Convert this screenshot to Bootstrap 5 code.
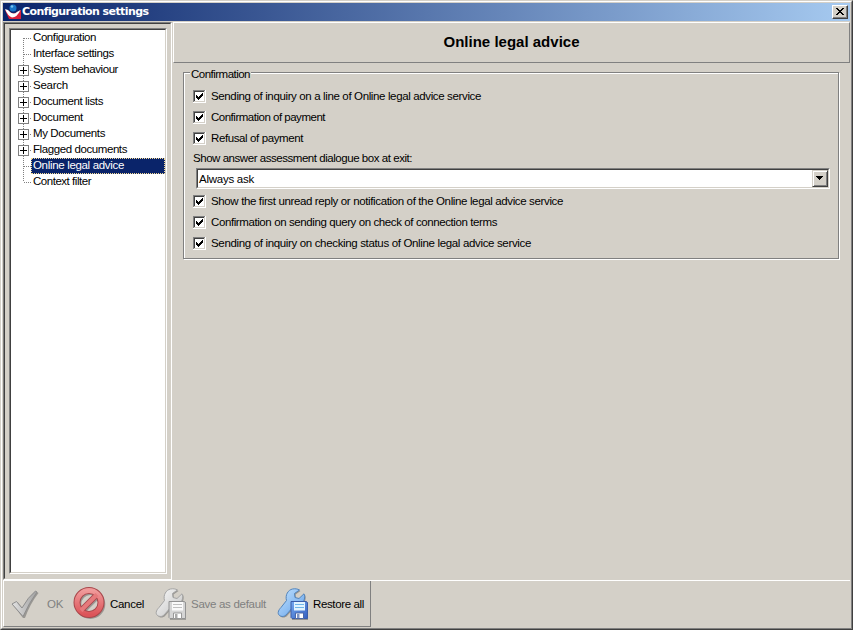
<!DOCTYPE html>
<html lang="en">
<head>
<meta charset="utf-8">
<title>Configuration settings</title>
<link href="https://cdn.jsdelivr.net/npm/bootstrap@5.3.0/dist/css/bootstrap.min.css" rel="stylesheet">
<style>
:root{--face:#d4d0c8;--mid:#808080;--dark:#404040}
body{margin:0;background:var(--face);font:11.5px/16px "Liberation Sans",Arial,sans-serif;color:#000;overflow:hidden}
svg{display:block;flex:none}
.win{width:853px;height:630px;background:var(--face);border:1px solid;border-color:var(--face) var(--dark) var(--dark) var(--face)}
.win-in{height:628px;border:1px solid;border-color:#fff var(--mid) var(--mid) #fff;padding:1px}
.caption{height:18px;background:linear-gradient(90deg,#0a246a,#a6caf0);color:#fff;margin-bottom:1px;padding:0 2px 0 2px}
.caption-text{font:bold 11px/18px "DejaVu Sans","Noto Sans",sans-serif;margin-left:1px}
.btn-close-win{width:16px;height:14px;border:1px solid;border-color:#fff var(--dark) var(--dark) #fff;box-shadow:inset -1px -1px var(--mid);background:var(--face);border-radius:0;padding:0}
.upper{height:558px}
.side{width:169px;border:1px solid;border-color:var(--mid) #fff #fff var(--mid);height:558px}
.side-in{border:1px solid;border-color:var(--dark) var(--face) var(--face) var(--dark);padding:4px;height:556px}
.sunk{border:1px solid;border-color:var(--mid) #fff #fff var(--mid)}
.sunk-in{border:1px solid;border-color:var(--dark) var(--face) var(--face) var(--dark);background:#fff}
.tree{width:158px;height:546px}
.tree .sunk-in{height:544px}
.tree-row{height:16px}
.tree-row svg{margin-left:4px}
.tree-label{height:16px;line-height:12px;flex:1;padding-left:1px;border:1px solid transparent}
.tree-row.sel .tree-label{background:#0a246a;color:#fff;border:1px dotted #f5db95}
.fit{display:inline-block;white-space:pre;line-height:inherit}
.main{width:678px}
.head{height:41px;border:1px solid;border-color:#fff var(--mid) var(--mid) #fff;width:677px;margin-left:1px;padding-bottom:2px;font-weight:bold;font-size:15px}
.group{margin:9px 10px 0 11px;width:656px;height:187px;border:1px solid var(--mid);box-shadow:1px 1px #fff,inset 1px 1px #fff;padding:0 9px 0 9px}
.legend-text{background:var(--face);height:14px;line-height:14px;margin:-6px 0 0 -3px;padding:0 1px;width:61px;position:relative}
.check-row{height:21px}
.check-row .fit{line-height:16px;padding-bottom:2px}
.box{width:13px;height:13px;margin-right:5px}
.checks-a{padding-top:5px}
.checks-b{padding-top:2px}
.ask-line{height:19px;padding-top:1px}
.combo{width:634px;height:21px;margin-left:3px}
.combo .sunk-in{height:19px;padding-left:1px}
.combo .fit{line-height:18px}
.combo-btn{width:16px;height:17px;border:1px solid;border-color:var(--face) var(--dark) var(--dark) var(--face);box-shadow:inset 1px 1px #fff,inset -1px -1px var(--mid);background:var(--face)}
.lower{border-top:1px solid #fff;height:48px;width:847px}
.tools{width:368px;height:46px;border:1px solid;border-color:transparent var(--mid) var(--mid) #fff;border-top:0}
.off{color:var(--mid)}
</style>
</head>
<body>
<svg width="0" height="0" class="position-absolute">
<defs>
<linearGradient id="gw" x1="0" y1="0" x2="1" y2="1"><stop offset="0" stop-color="#fafafa"/><stop offset="1" stop-color="#c2c2c2"/></linearGradient>
<linearGradient id="gc" x1="0" y1="0" x2="1" y2="0"><stop offset="0" stop-color="#e2e2e2"/><stop offset=".45" stop-color="#c4c4c4"/><stop offset="1" stop-color="#a2a2a2"/></linearGradient>
<linearGradient id="bw" x1="0" y1="0" x2="1" y2="1"><stop offset="0" stop-color="#c5e4ff"/><stop offset="1" stop-color="#5f9ee8"/></linearGradient>
<linearGradient id="bd" x1="0" y1="0" x2="1" y2="1"><stop offset="0" stop-color="#76aaf0"/><stop offset="1" stop-color="#345fc0"/></linearGradient>
<linearGradient id="rd" x1="0" y1="0" x2="0" y2="1"><stop offset="0" stop-color="#f09a9a"/><stop offset="1" stop-color="#dc5459"/></linearGradient>
<path id="wrench" d="M9.500 12.500C8 7 11 2 15.500 1C18 .5 20.500 .8 22.500 2L17.500 5.500L18 9.500L22 10.500L27 5.800C28.500 9 27.500 14 23.500 16L17 18L9 27C6 30 .8 28 1.200 24.500C1.300 22.500 3 20.500 4 19.500Z"/>
</defs>
</svg>
<div class="win"><div class="win-in">
  <div class="caption d-flex align-items-center">
    <svg width="16" height="16" viewBox="0 0 16 16"><path d="M0 6 4 7Q8 11 12 8L16 6V15H4Z" fill="#d91f3c"/><path d="M0 5 3 6Q8 12 12 8L15.500 6Q12 13.500 7 13.500Q3 12.500 0 5Z" fill="#fff"/><circle cx="8" cy="4" r="3.500" fill="#1976c8"/><circle cx="7" cy="2.500" r="1.300" fill="#78c1ee"/></svg>
    <span class="caption-text fit" data-w="126">Configuration settings</span>
    <button class="btn-close-win ms-auto d-flex" aria-label="Close"><svg width="14" height="12" shape-rendering="crispEdges"><path d="M3 2h2v1h1v1h2v-1h1v-1h2v1h-1v1h-1v1h-1v1h1v1h1v1h1v1h-2v-1h-1v-1h-2v1h-1v1h-2v-1h1v-1h1v-1h1v-1h-1v-1h-1v-1h-1z"/></svg></button>
  </div>
  <div class="upper d-flex">
    <div class="side"><div class="side-in"><div class="tree sunk"><div class="sunk-in" id="tree"></div></div></div></div>
    <div class="main">
      <div class="head d-flex align-items-center justify-content-center"><span class="fit" data-w="136">Online legal advice</span></div>
      <div class="group">
        <div class="legend-text"><span class="fit" data-w="59">Confirmation</span></div>
        <div class="checks-a">
          <div class="check-row d-flex align-items-center"><span class="box"></span><span class="fit" data-w="270">Sending of inquiry on a line of Online legal advice service</span></div>
          <div class="check-row d-flex align-items-center"><span class="box"></span><span class="fit" data-w="114">Confirmation of payment</span></div>
          <div class="check-row d-flex align-items-center"><span class="box"></span><span class="fit" data-w="92">Refusal of payment</span></div>
        </div>
        <div class="ask-line"><span class="fit" data-w="219">Show answer assessment dialogue box at exit:</span></div>
        <div class="combo sunk"><div class="sunk-in d-flex"><span class="fit" data-w="55">Always ask</span><span class="combo-btn ms-auto"><svg width="14" height="15" shape-rendering="crispEdges"><path d="M3 5h7v1h-1v1h-1v1h-1v1h-1v-1h-1v-1h-1v-1h-1z"/></svg></span></div></div>
        <div class="checks-b">
          <div class="check-row d-flex align-items-center"><span class="box"></span><span class="fit" data-w="352">Show the first unread reply or notification of the Online legal advice service</span></div>
          <div class="check-row d-flex align-items-center"><span class="box"></span><span class="fit" data-w="286">Confirmation on sending query on check of connection terms</span></div>
          <div class="check-row d-flex align-items-center"><span class="box"></span><span class="fit" data-w="320">Sending of inquiry on checking status of Online legal advice service</span></div>
        </div>
      </div>
    </div>
  </div>
  <div class="lower"><div class="tools d-flex align-items-center">
    <svg style="margin-left:7px" width="28" height="32" viewBox="0 0 28 32"><path d="M1 16 6 13.500 11 20Q17 9 25 3L26.500 4Q18 15 13 29L11 29Z" fill="#555" opacity=".45" transform="translate(1,1)"/><path d="M1 16 5.500 13.500 11 20Q17 9 24.500 3L26 4Q18 15 12 28.500Z" fill="url(#gc)" stroke="#8e8e8e"/></svg>
    <span class="fit off" style="margin-left:8px" data-w="16">OK</span>
    <svg style="margin-left:10px" width="33" height="33" viewBox="0 0 33 33"><g fill="none" stroke="#555" opacity=".45" transform="translate(1.300,1.500)"><circle cx="16" cy="15.500" r="12" stroke-width="6"/><path d="M9 22.500 23 8.500" stroke-width="5"/></g><g fill="none" stroke="#a8474b"><circle cx="16" cy="15.500" r="12" stroke-width="7"/><path d="M9 22.500 23 8.500" stroke-width="6"/></g><circle cx="16" cy="15.500" r="12" fill="none" stroke="url(#rd)" stroke-width="5"/><path d="M8 23.500 24 7.500" stroke="#e67a7c" stroke-width="4"/></svg>
    <span class="fit" style="margin-left:4px" data-w="34">Cancel</span>
    <svg style="margin-left:11px" width="32" height="32" viewBox="0 0 32 32"><use href="#wrench" fill="#555" opacity=".45" x="1" y="1"/><use href="#wrench" fill="url(#gw)" stroke="#a4a4a4"/><path d="M15 14H31V32H15Z" fill="#555" opacity=".4"/><path d="M14 13.500H29.500L30.500 15V30.500H15L14 29.500Z" fill="#d5d5d5" stroke="#929292"/><path d="M17 14H28V22.500H17Z" fill="#fafafa"/><path d="M18 16.500H27M18 19.500H27" stroke="#c0c0c0"/><path d="M18.500 25H26.500V30.500H18.500Z" fill="#fff" stroke="#999"/><path d="M20 26H22.500V30H20Z" fill="#aaa"/></svg>
    <span class="fit off" style="margin-left:4px" data-w="75">Save as default</span>
    <svg style="margin-left:11px" width="32" height="32" viewBox="0 0 32 32"><use href="#wrench" fill="#555" opacity=".5" x="1" y="1"/><use href="#wrench" fill="url(#bw)" stroke="#5384bb"/><path d="M15 14H31V32H15Z" fill="#555" opacity=".5"/><path d="M14 13.500H29.500L30.500 15V30.500H15L14 29.500Z" fill="url(#bd)" stroke="#3a5da8"/><path d="M17 14H28V22.500H17Z" fill="#e2f4ff"/><path d="M18 16.500H27M18 19.500H27" stroke="#70b6e8"/><path d="M18.500 25H26.500V30.500H18.500Z" fill="#fff" stroke="#4b68a8"/><path d="M20 26H22.500V30H20Z" fill="#7c93c4"/></svg>
    <span class="fit" style="margin-left:4px" data-w="51">Restore all</span>
  </div></div>
</div></div>
<script src="https://cdn.jsdelivr.net/npm/bootstrap@5.3.0/dist/js/bootstrap.bundle.min.js"></script>
<script>
// label, width, expandable
const rows=[["Configuration",63,0],["Interface settings",81,0],["System behaviour",85,1],["Search",35,1],["Document lists",70,1],["Document",50,1],["My Documents",72,1],["Flagged documents",94,1],["Online legal advice",91,0],["Context filter",58,0]];
document.getElementById("tree").innerHTML=rows.map(([t,w,x],i)=>{
  const y1=i===0?8:0,y2=i===rows.length-1?8:16;
  return `<div class="tree-row d-flex${i===8?" sel":""}"><svg width="16" height="16" shape-rendering="crispEdges"><path d="M8.500 ${y1}V${y2}M9 8.500H16" stroke="#808080" stroke-dasharray="1 1" fill="none"/>${x?'<rect x="3.500" y="3.500" width="10" height="10" fill="#fff" stroke="#808080"/><path d="M5 8.500H12M8.500 5V12" stroke="#000"/>':""}</svg><span class="tree-label"><span class="fit" data-w="${w}">${t}</span></span></div>`}).join("");
document.querySelectorAll(".box").forEach(b=>b.innerHTML='<svg width="13" height="13" shape-rendering="crispEdges"><path fill="#fff" d="M0 0h13v13H0z"/><path fill="#808080" d="M0 0h12v1H1v11H0z"/><path fill="#404040" d="M1 1h10v1H2v9H1z"/><path fill="#d4d0c8" d="M11 1h1v11H1v-1h10z"/><path d="M3 5h1v1h1v1h1v-1h1v-1h1v-1h1v-1h1v3h-1v1h-1v1h-1v1h-1v1h-1v-1h-1v-1h-1z"/></svg>');
// spread letters so that every label has its nominal width
document.querySelectorAll(".fit").forEach(e=>{
  const n=e.textContent.length;
  e.style.letterSpacing=((e.dataset.w-e.getBoundingClientRect().width)/n)+"px";
});
</script>
</body>
</html>
